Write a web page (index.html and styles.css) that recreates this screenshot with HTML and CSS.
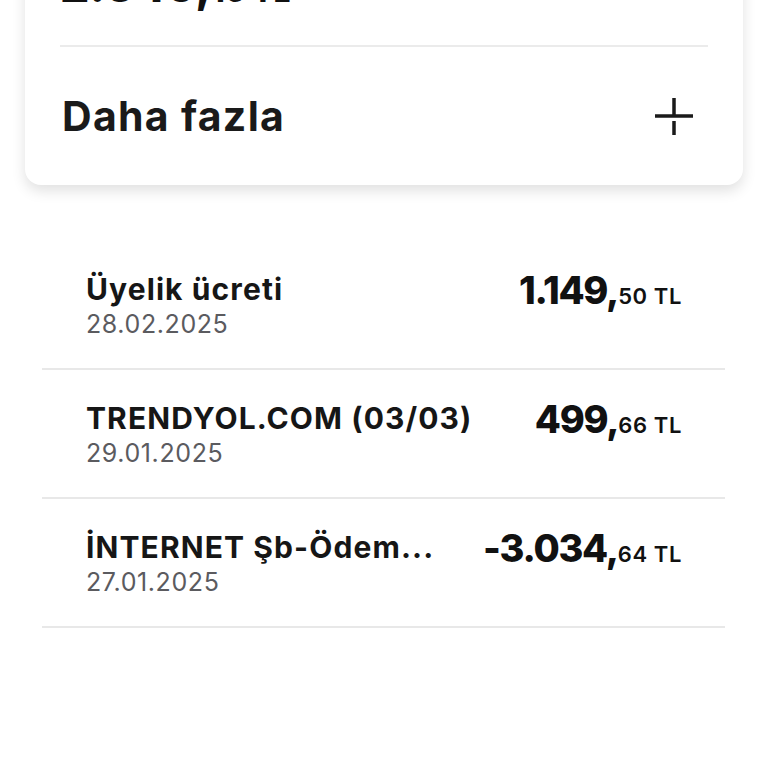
FILE: index.html
```html
<!DOCTYPE html>
<html lang="tr">
<head>
  <meta charset="UTF-8">
  <title>Kart hareketleri</title>
  <meta name="viewport" content="width=device-width, initial-scale=1.0" />
  <link rel="stylesheet" href="styles.css">
</head>
<body>
  <div class="card">
    <div class="balance">2.649,<span class="small">16 TL</span></div>
    <div class="divider"></div>
    <div class="more">
      <span>Daha fazla</span>
      <svg class="plus" width="40" height="40" viewBox="0 0 40 40">
        <path d="M20 1 V18 M1 19 H39 M20 24 V38" stroke="#1a1a1a" stroke-width="3.5" fill="none"/>
      </svg>
    </div>
  </div>

  <ul class="transactions">
    <li class="row">
      <div class="info">
        <div class="title">Üyelik ücreti</div>
        <div class="date">28.02.2025</div>
      </div>
      <div class="amount">1.149,<span class="small">50 TL</span></div>
    </li>
    <li class="row">
      <div class="info">
        <div class="title">TRENDYOL.COM (03/03)</div>
        <div class="date">29.01.2025</div>
      </div>
      <div class="amount">499,<span class="small">66 TL</span></div>
    </li>
    <li class="row">
      <div class="info">
        <div class="title">İNTERNET Şb-Ödem...</div>
        <div class="date">27.01.2025</div>
      </div>
      <div class="amount">-3.034,<span class="small">64 TL</span></div>
    </li>
  </ul>
</body>
</html>
```

FILE: styles.css
```css
body {
  font-family: 'Inter', 'Noto Sans', sans-serif;
  background: #ffffff;
  color: #111111;
  margin: 0;
  overflow: hidden;
}

.card {
  margin: -46px 25px 0;
  padding: 6px 35px 0;
  background: white;
  border-radius: 16px;
  box-shadow: 0 6px 14px rgba(0, 0, 0, 0.12);
}

.balance {
  font-size: 46px;
  font-weight: 800;
  line-height: 50px;
  letter-spacing: 0;
}

.balance .small {
  font-size: 30px;
  letter-spacing: 0.5px;
}

.divider {
  height: 2px;
  background: #ebebeb;
  margin-top: 29px;
}

.more {
  display: flex;
  justify-content: space-between;
  align-items: center;
  height: 138px;
  padding: 0 0 0 2px;
  font-size: 41px;
  font-weight: 700;
  letter-spacing: 1.3px;
  color: #1a1a1a;
}

.plus {
  margin-right: 14px;
  margin-top: 2px;
}

.transactions {
  list-style: none;
  margin: 56px 43px 0 42px;
  padding: 0;
}

.row {
  display: flex;
  justify-content: space-between;
  align-items: flex-start;
  height: 127px;
  padding: 0 43px 0 44px;
  border-bottom: 2px solid #e8e8e8;
}

.info {
  padding-top: 30px;
}

.title {
  font-size: 30px;
  font-weight: 700;
  line-height: 36px;
  letter-spacing: 1.1px;
  color: #161616;
}

.date {
  font-size: 25px;
  line-height: 34px;
  letter-spacing: 0.6px;
  color: #5b5b5f;
}

.amount {
  padding-top: 28px;
  font-size: 38px;
  font-weight: 800;
  line-height: 42px;
  letter-spacing: -1.3px;
  white-space: nowrap;
}

.amount .small {
  font-size: 22px;
  font-weight: 600;
  letter-spacing: 0.6px;
}
```
